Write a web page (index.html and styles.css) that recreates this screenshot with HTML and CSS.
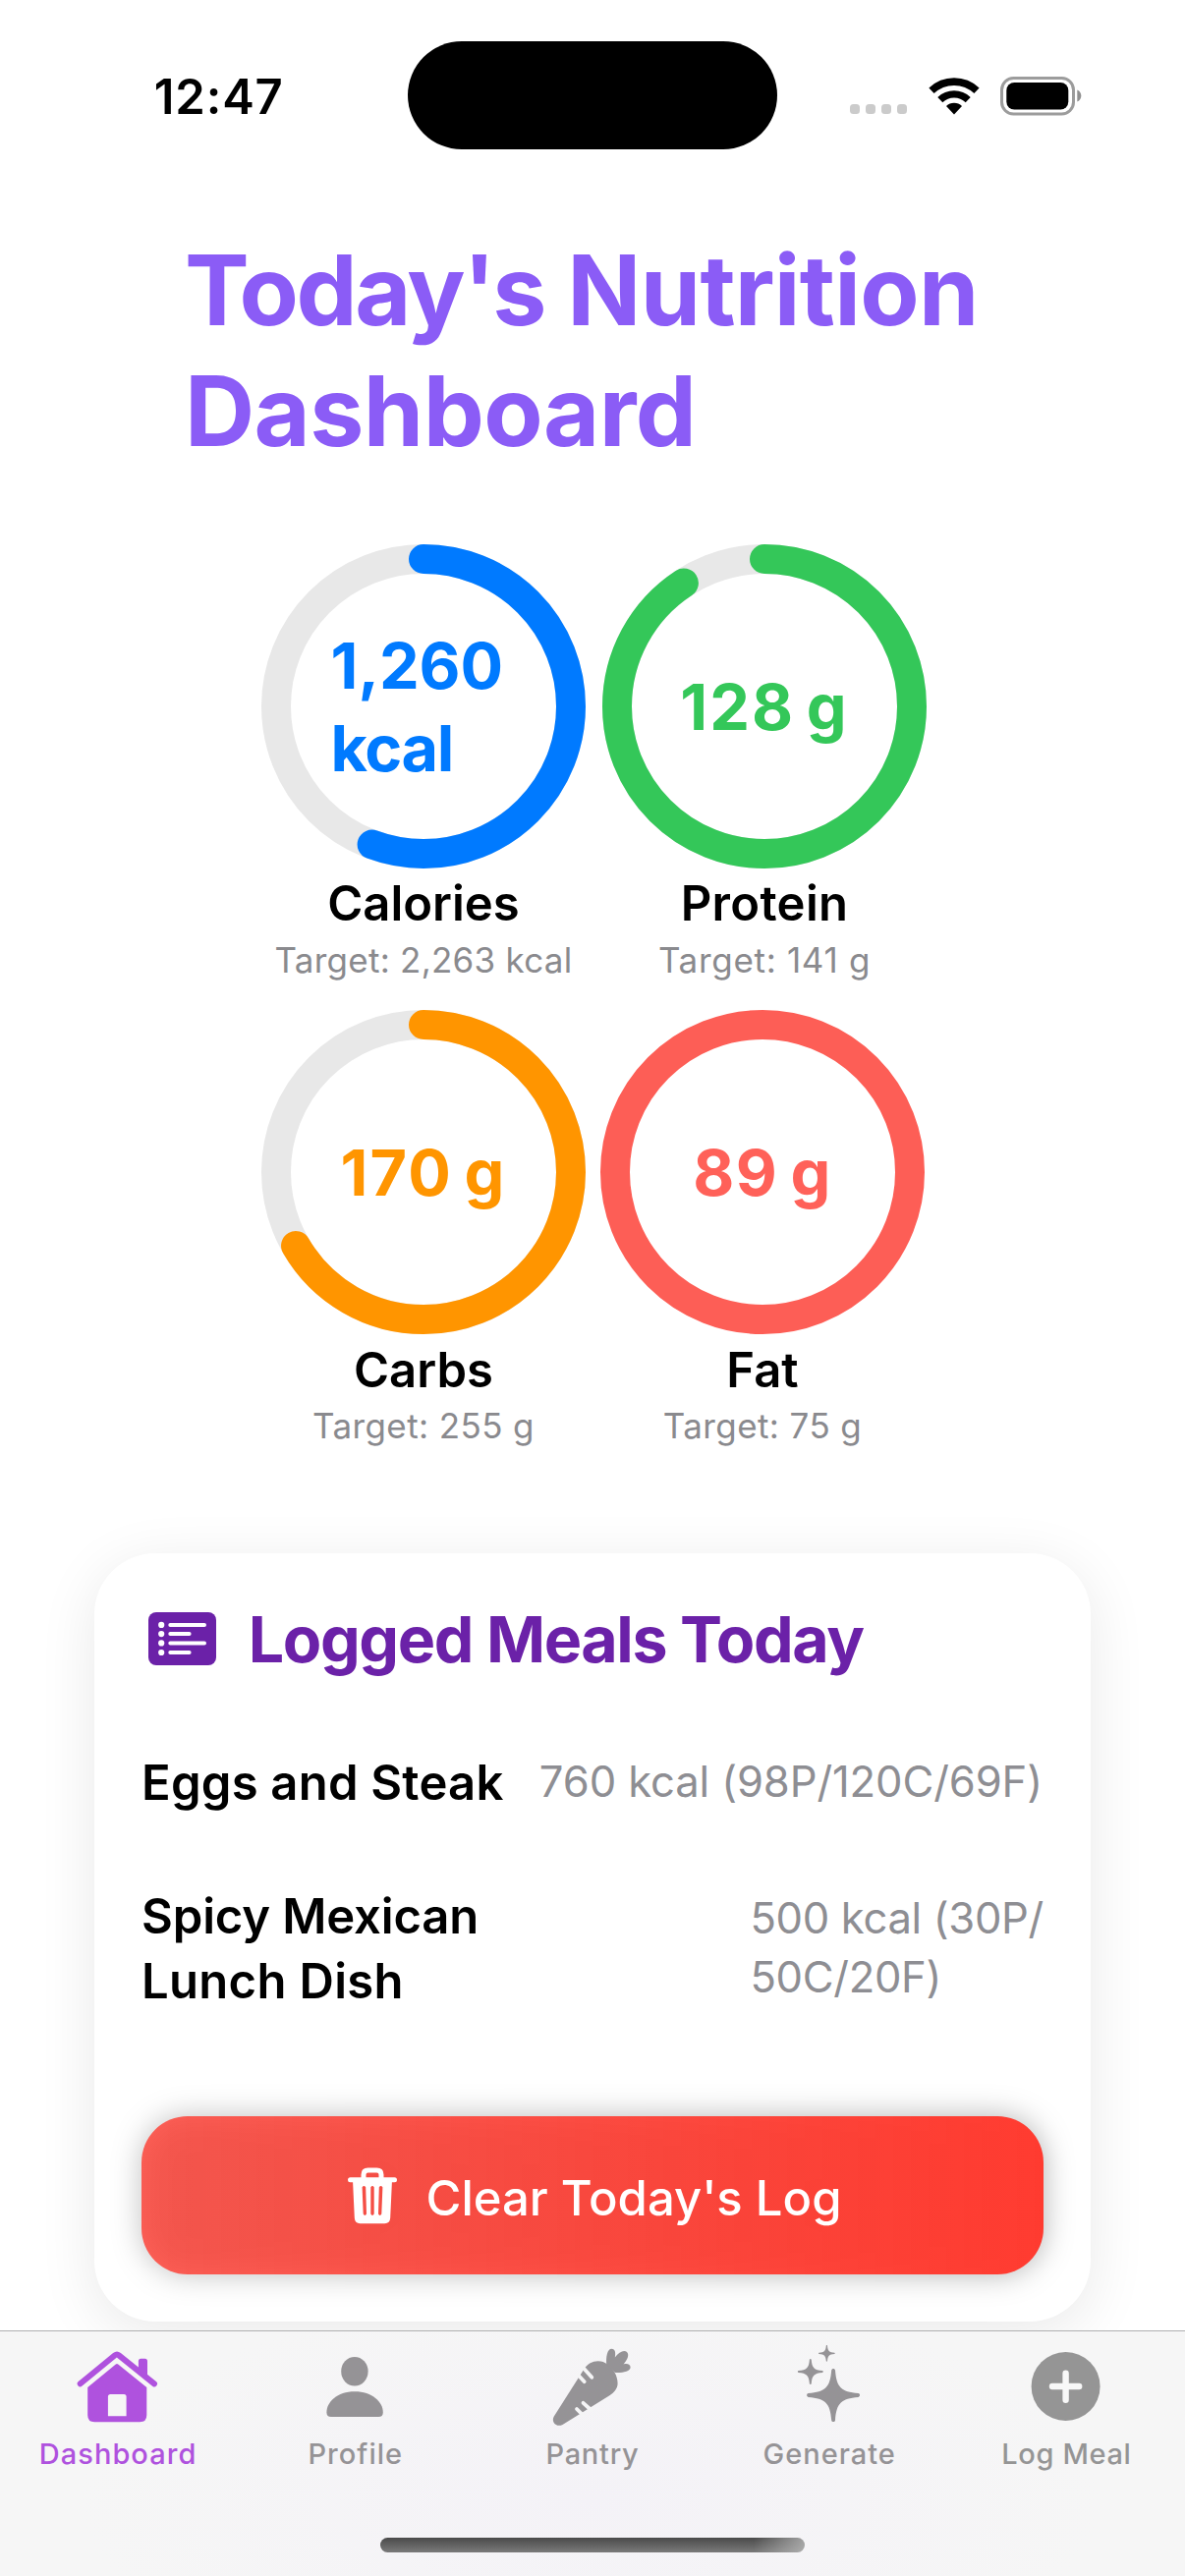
FILE: index.html
```html
<!DOCTYPE html>
<html lang="en">
<head>
<meta charset="utf-8">
<title>Today's Nutrition Dashboard</title>
<link rel="stylesheet" href="styles.css">
</head>
<body>
<div class="phone">
  <header class="status">
    <div class="status-time">12:47</div>
    <div class="island"></div>
    <div class="status-icons">
      <div class="cell-dots"><i></i><i></i><i></i><i></i></div>
      <svg class="wifi" width="52" height="38" viewBox="0 0 52 38" fill="none" stroke="#000">
        <path d="M3 13.3A33.4 33.4 0 0 1 49 13.3" stroke-width="7.6"/>
        <path d="M11.8 22.6A20.6 20.6 0 0 1 40.2 22.6" stroke-width="7.3"/>
        <path d="M18 29A11.7 11.7 0 0 1 34 29L26 37.5Z" fill="#000" stroke="none"/>
      </svg>
      <svg class="battery" width="84" height="40" viewBox="0 0 84 40">
        <rect x="1.5" y="1.5" width="73" height="36.5" rx="12" fill="none" stroke="#9c9c9c" stroke-width="3"/>
        <rect x="6.3" y="6" width="63" height="27.5" rx="8" fill="#000"/>
        <path d="M78.3 13.6C83.7 15.6 83.7 23.6 78.3 25.6Z" fill="#8f8f8f"/>
      </svg>
    </div>
  </header>

  <main class="content">
    <h1 class="title"><span class="title-today">Today's</span> <span class="title-nutrition">Nutrition</span><br><span class="title-bottom">Dashboard</span></h1>

    <section class="macros">
      <div class="macro-row first">
        <article class="macro">
          <div class="ring">
            <svg viewBox="0 0 330 330"><circle class="track" cx="165" cy="165" r="150"/><circle class="arc blue" cx="165" cy="165" r="150" pathLength="1000" stroke-dasharray="556.8 1000"/></svg>
            <div class="value two-line blue"><span>1,260</span><span class="unit">kcal</span></div>
          </div>
          <h2>Calories</h2>
          <p class="target-a">Target: 2,263 kcal</p>
        </article>
        <article class="macro">
          <div class="ring">
            <svg viewBox="0 0 330 330"><circle class="track" cx="165" cy="165" r="150"/><circle class="arc green" cx="165" cy="165" r="150" pathLength="1000" stroke-dasharray="907.8 1000"/></svg>
            <div class="value wide green">128 g</div>
          </div>
          <h2 class="protein">Protein</h2>
          <p class="target-b">Target: 141 g</p>
        </article>
      </div>
      <div class="macro-row second">
        <article class="macro">
          <div class="ring">
            <svg viewBox="0 0 330 330"><circle class="track" cx="165" cy="165" r="150"/><circle class="arc orange" cx="165" cy="165" r="150" pathLength="1000" stroke-dasharray="666.7 1000"/></svg>
            <div class="value wide orange">170 g</div>
          </div>
          <h2>Carbs</h2>
          <p>Target: 255 g</p>
        </article>
        <article class="macro">
          <div class="ring">
            <svg viewBox="0 0 330 330"><circle class="arc red" cx="165" cy="165" r="150"/></svg>
            <div class="value short red">89 g</div>
          </div>
          <h2>Fat</h2>
          <p>Target: 75 g</p>
        </article>
      </div>
    </section>

    <section class="card">
      <div class="card-head">
        <svg width="69" height="54" viewBox="0 0 69 54">
          <rect width="69" height="54" rx="8" fill="#6b21a8"/>
          <g fill="#fff"><circle cx="13.2" cy="12.9" r="3.1"/><circle cx="13.2" cy="22.1" r="3.1"/><circle cx="13.2" cy="31.4" r="3.1"/><circle cx="13.2" cy="41" r="3.1"/></g>
          <path d="M22.3 12.9H57M22.3 22.1H41.6M22.3 31.4H57M22.3 41H41.6" stroke="#fff" stroke-width="4" stroke-linecap="round"/>
        </svg>
        <h2>Logged Meals Today</h2>
      </div>
      <div class="meal">
        <h3>Eggs and Steak</h3>
        <p>760 kcal (98P/120C/69F)</p>
      </div>
      <div class="meal meal-tall">
        <h3>Spicy Mexican<br><span class="roomy">Lunch Dish</span></h3>
        <p>500 kcal (30P/<br>50C/20F)</p>
      </div>
      <button class="clear" type="button">
        <svg width="50" height="58" viewBox="0 0 50 58">
          <path d="M16 11V7.5Q16 3 20.5 3H29.5Q34 3 34 7.5V11" fill="none" stroke="#fff" stroke-width="5"/>
          <path d="M2.5 12.7H47.5" stroke="#fff" stroke-width="5" stroke-linecap="round"/>
          <path fill="#fff" fill-rule="evenodd" d="M5 13H45L43.2 51.5Q42.9 57.2 37.5 57.2H12.5Q7.1 57.2 6.8 51.5ZM14.6 20.2L15.7 47.5Q17.3 50.3 19 47.5L18.2 20.2Q16.4 17.8 14.6 20.2ZM23.3 20.2V47.5Q25 50.3 26.7 47.5V20.2Q25 17.8 23.3 20.2ZM31.8 20.2L31 47.5Q32.7 50.3 34.3 47.5L35.4 20.2Q33.6 17.8 31.8 20.2Z"/>
        </svg>
        <span>Clear Today's Log</span>
      </button>
    </section>
  </main>

  <nav class="tabs">
    <div class="tab-row">
      <a class="tab active">
        <svg viewBox="0 0 100 86">
          <path d="M10.7 41.3L46 12.3Q48 10.7 50 12.3L86 41.3" fill="none" stroke="currentColor" stroke-width="6" stroke-linecap="round"/>
          <path d="M69.9 27V18.2Q69.9 15.7 72.4 15.7H76.5Q79 15.7 79 18.2V36Z"/>
          <path fill-rule="evenodd" d="M46.8 21.6Q48 20.6 49.2 21.6L78.3 45V73.3Q78.3 80.3 71.3 80.3H25.2Q18.2 80.3 18.2 73.3V45ZM41.4 52Q38.9 52 38.9 54.5V74.3H57.6V54.5Q57.6 52 55.1 52Z"/>
        </svg>
        <span>Dashboard</span>
      </a>
      <a class="tab">
        <svg viewBox="0 0 100 86">
          <ellipse cx="48.9" cy="28.7" rx="13.7" ry="14.8"/>
          <path d="M25 75Q20.4 75 20.4 70.5C20.4 60 31 49.3 49 49.3C67 49.3 77.8 60 77.8 70.5Q77.8 75 73.2 75Z"/>
        </svg>
        <span>Profile</span>
      </a>
      <a class="tab pantry">
        <svg viewBox="0 0 100 86">
          <path d="M10.8 74.5L41 27C45 21 50 18.3 55.5 18.3C60 18.3 62 19.5 64.5 21C71 25.5 75.6 33 75.6 41C75.6 46 72 50.5 67 53.6L19.5 83C13.5 86 7.5 80.5 10.8 74.5Z"/>
          <path d="M64.3 22C63.5 14 65 5.7 69.5 5.7C73 5.7 73.8 9.5 72.8 14.5C77 9 82 6.3 85 9C87.8 12 85.5 17 81.5 21.4C85.5 20.3 88.6 21.5 88.6 24.5C88.6 29 80 30.5 73 30Z"/>
          <path d="M35 32L41.7 39.2M40.5 25L49.3 34.8M40.5 60.8L48.5 68M34 67L40 73" fill="none" stroke="#f5f5f6" stroke-width="3.8" stroke-linecap="round"/>
        </svg>
        <span>Pantry</span>
      </a>
      <a class="tab">
        <svg viewBox="0 0 100 86">
          <defs><path id="spark" d="M-1.9-25.4C-1.6-27.5 1.6-27.5 1.9-25.4C3.2-8 8-3.2 25.4-1.9C27.5-1.6 27.5 1.6 25.4 1.9C8 3.2 3.2 8 1.9 25.4C1.6 27.5-1.6 27.5-1.9 25.4C-3.2 8-8 3.2-25.4 1.9C-27.5 1.6-27.5-1.6-25.4-1.9C-8-3.2-3.2-8-1.9-25.4Z"/></defs>
          <use href="#spark" transform="translate(54.1 53)"/>
          <use href="#spark" transform="translate(30.8 29) scale(.48)"/>
          <use href="#spark" transform="translate(47.4 10.3) scale(.31)"/>
        </svg>
        <span>Generate</span>
      </a>
      <a class="tab log">
        <svg viewBox="0 0 100 86">
          <circle cx="49.6" cy="44" r="35"/>
          <path d="M36 44H63.2M49.6 30.8V57.8" stroke="#f8f8f8" stroke-width="6.4" stroke-linecap="round"/>
        </svg>
        <span>Log Meal</span>
      </a>
    </div>
    <div class="home-bar"></div>
  </nav>
</div>
</body>
</html>
```
FILE: styles.css
```css
* { box-sizing: border-box; }
body, h1, h2, h3, p { margin: 0; }
body { background: #fff; color: #000; font-family: Inter, "Liberation Sans", sans-serif; }
svg { display: block; flex: none; }

.phone { width: 1206px; height: 2622px; display: flex; flex-direction: column; overflow: hidden; }

/* Status bar */
.status { height: 198px; flex: none; padding-top: 42px; display: grid; grid-template-columns: 415px 376px 1fr; align-items: start; }
.status-time { height: 111px; padding-left: 156.8px; font-size: 49px; line-height: 113px; font-weight: 600; letter-spacing: .82px; }
.island { height: 110px; border-radius: 55px; background: #000; }
.status-icons { height: 111px; padding-left: 74px; display: flex; align-items: center; }
.cell-dots { display: flex; gap: 6px; margin: 27px 21.5px 0 0; }
.cell-dots i { width: 10px; height: 10px; border-radius: 3.5px; background: #cbcbcb; }
.battery { margin-left: 21px; }

.content { flex: none; }
.title { margin-top: 36px; padding-left: 188px; font-size: 98.6px; line-height: 123px; font-weight: 700; color: #8b5cf6; }
.title-today { letter-spacing: -2.5px; }
.title-nutrition { letter-spacing: -.75px; }
.title-bottom { letter-spacing: -.6px; }

/* Macro rings */
.macros { margin-top: 74px; padding-left: 266px; display: flex; flex-direction: column; gap: 27px; }
.macro-row { display: flex; }
.first { gap: 17px; }
.second { gap: 15px; }
.macro { width: 330px; text-align: center; }
.ring { position: relative; height: 330px; }
.ring svg { width: 330px; height: 330px; transform: rotate(-90deg); }
.ring circle { fill: none; stroke-width: 30; }
.track { stroke: #e8e8e8; }
.arc { stroke: currentColor; stroke-linecap: round; }
.blue { color: #007aff; }
.green { color: #34c759; }
.orange { color: #ff9500; }
.red { color: #ff6159; }
.arc.red { color: #fd5e56; }
.value { position: absolute; inset: 0; padding-top: 2px; display: flex; flex-direction: column; align-items: center; justify-content: center; font-size: 64.7px; line-height: 83.7px; font-weight: 700; letter-spacing: -.1px; }
.wide { letter-spacing: 2.1px; word-spacing: -6px; }
.short { letter-spacing: 1.4px; word-spacing: -4.5px; }
.two-line { align-items: flex-start; padding-left: 70.6px; }
.unit { letter-spacing: -1.4px; }
.macro h2 { margin-top: 6px; font-size: 49px; line-height: 60px; font-weight: 600; }
.macro .protein { letter-spacing: .33px; }
.macro p { margin-top: 3px; font-size: 35px; line-height: 48px; color: #8a8a8e; letter-spacing: .4px; }
.macro .target-a { letter-spacing: .25px; }
.macro .target-b { letter-spacing: .69px; }
.second h2 { margin-top: 7px; }
.second p { margin-top: 2px; }

/* Logged meals */
.card { width: 1014px; height: 782px; margin: 106px 0 0 96px; padding: 47px 48px 48px; border-radius: 62px; background: #fff; box-shadow: 0 12px 60px rgba(0, 0, 0, .09); }
.card-head { display: flex; align-items: center; gap: 32.7px; height: 80px; padding-left: 7px; color: #6b21a8; }
.card-head h2 { padding-top: 2px; font-size: 64.5px; line-height: 80px; font-weight: 700; letter-spacing: -1.38px; }
.meal { margin-top: 74px; display: flex; align-items: center; justify-content: space-between; white-space: nowrap; }
.meal-tall { margin-top: 70px; }
.meal h3 { font-size: 49px; line-height: 66px; font-weight: 600; letter-spacing: .22px; }
.meal-tall h3 { letter-spacing: -.15px; }
.meal-tall .roomy { letter-spacing: .31px; }
.meal p { padding-bottom: 2px; font-size: 43.6px; line-height: 60px; color: #8e8e93; letter-spacing: -.12px; }
.meal:not(.meal-tall) p { padding-right: 1px; }
.meal-tall p { letter-spacing: -.33px; }
.clear { width: 918px; height: 161px; margin-top: 104px; padding: 0 0 0 5px; border: 0; border-radius: 47px; display: flex; align-items: center; justify-content: center; gap: 29px; background: linear-gradient(90deg, rgba(255, 59, 48, .8), #ff3b30); filter: drop-shadow(0 0 15px rgba(0, 0, 0, .3)); color: #fff; font-family: inherit; }
.clear span { padding-top: 6px; font-size: 49px; line-height: 66px; font-weight: 550; letter-spacing: 0; }

/* Tab bar */
.tabs { position: relative; height: 250px; flex: none; margin-top: auto; border-top: 1px solid #b0b0b1; background: radial-gradient(ellipse 520px 210px at 600px 170px, #f4f2f7, #f6f6f6); }
.tab-row { display: grid; grid-template-columns: repeat(5, 1fr); padding-top: 12px; }
.tab { display: flex; flex-direction: column; align-items: center; color: #959396; font-size: 29px; line-height: 40px; font-weight: 500; letter-spacing: 1px; }
.tab svg { width: 100px; height: 86px; margin-bottom: 6.5px; fill: currentColor; }
.tab.active { color: #af52de; letter-spacing: 1.05px; }
.tab.active span { margin-left: -1px; }
.pantry { letter-spacing: .75px; }
.log { letter-spacing: .65px; color: #959595; }
.home-bar { width: 432px; height: 15px; margin: 65.5px 0 0 387px; border-radius: 8px; background: linear-gradient(90deg, transparent 88%, rgba(190, 190, 190, .75)), linear-gradient(#4a4a4a, #7a7a7a); }
```
